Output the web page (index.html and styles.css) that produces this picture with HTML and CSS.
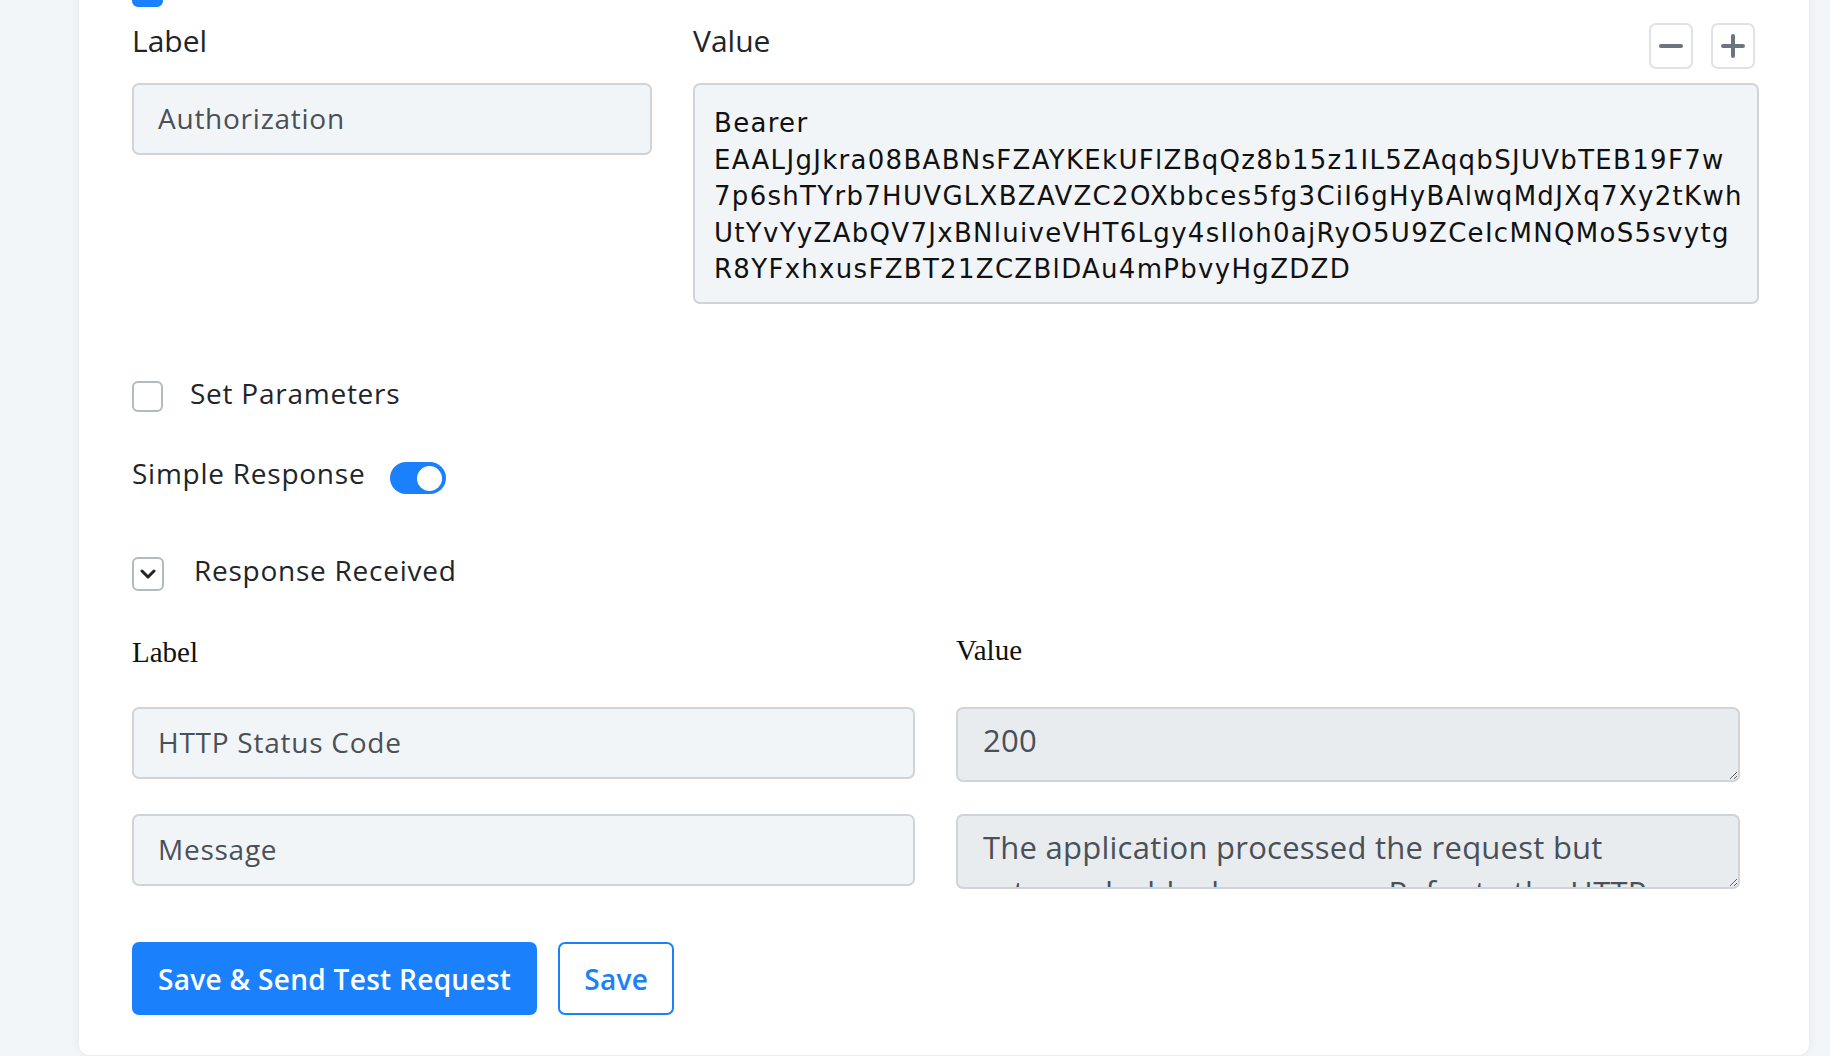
FILE: index.html
```html
<!DOCTYPE html>
<html lang="en">
<head>
<meta charset="utf-8">
<title>Webhook request</title>
<link rel="stylesheet" href="styles.css">
</head>
<body>
<div class="page">
  <section class="card">
    <span class="check check-on"></span>

    <div class="header-grid">
      <div class="head-cell">
        <span class="field-title">Label</span>
      </div>
      <div class="head-cell head-value">
        <span class="field-title">Value</span>
        <div class="steppers">
          <button class="step" type="button" aria-label="Remove header">
            <svg viewBox="0 0 24 24" width="24" height="24"><path d="M2 12h20"/></svg>
          </button>
          <button class="step" type="button" aria-label="Add header">
            <svg viewBox="0 0 24 24" width="24" height="24"><path d="M2 12h20M12 2v20"/></svg>
          </button>
        </div>
      </div>
      <div class="input input-top">Authorization</div>
      <div class="token">Bearer<br>EAALJgJkra08BABNsFZAYKEkUFlZBqQz8b15z1IL5ZAqqbSJUVbTEB19F7w<br>7p6shTYrb7HUVGLXBZAVZC2OXbbces5fg3CiI6gHyBAlwqMdJXq7Xy2tKwh<br>UtYvYyZAbQV7JxBNluiveVHT6Lgy4sIloh0ajRyO5U9ZCeIcMNQMoS5svytg<br>R8YFxhxusFZBT21ZCZBlDAu4mPbvyHgZDZD</div>
    </div>

    <div class="option option-params">
      <span class="check"></span>
      <span class="option-text">Set Parameters</span>
    </div>

    <div class="option option-simple">
      <span class="option-text">Simple Response</span>
      <span class="toggle"><span class="knob"></span></span>
    </div>

    <div class="option option-received">
      <span class="chev-box">
        <svg viewBox="0 0 16 10" width="16" height="10"><path d="M2 2l6 6 6-6"/></svg>
      </span>
      <span class="option-text">Response Received</span>
    </div>

    <div class="response-grid">
      <div class="plain-title">Label</div>
      <div class="plain-title plain-value">Value</div>
      <div class="input input-low">HTTP Status Code</div>
      <textarea class="readonly-area" readonly>200</textarea>
      <div class="input input-low">Message</div>
      <textarea class="readonly-area" readonly>The application processed the request but returned a blank response. Refer to the HTTP status code for details.</textarea>
    </div>

    <div class="actions">
      <button class="btn btn-primary" type="button">Save &amp; Send Test Request</button>
      <button class="btn btn-outline" type="button">Save</button>
    </div>
  </section>
</div>
</body>
</html>
```

FILE: styles.css
```css
html, body {
  margin: 0;
  padding: 0;
  height: 100%;
  overflow: hidden;
}

body {
  background: #f3f6f9;
  font-family: "Open Sans", "Lato", sans-serif;
  color: #212529;
}

.page {
  padding: 0 21px 0 79px;
}

.card {
  margin-top: -60px;
  padding: 36px 49px 40px 53px;
  background: #ffffff;
  border-radius: 10px;
  box-shadow: 0 0 8px rgba(30, 50, 80, 0.08);
}

/* checkboxes */
.check {
  display: block;
  box-sizing: border-box;
  width: 31px;
  height: 31px;
  border: 2px solid #b3bac2;
  border-radius: 6px;
  background: #fff;
  flex: none;
}

.check-on {
  background: #1a80fb;
  border-color: #1a80fb;
}

/* header row: label / value */
.header-grid {
  margin-top: 16px;
  display: grid;
  grid-template-columns: 520px 1066px;
  column-gap: 41px;
  row-gap: 14px;
}

.head-cell {
  height: 46px;
}

.head-value {
  display: flex;
  justify-content: space-between;
  align-items: flex-start;
}

.field-title {
  display: block;
  font-size: 30px;
  line-height: 36px;
  color: #212529;
}

.steppers {
  display: flex;
  gap: 18px;
  margin-right: 4px;
}

.step {
  box-sizing: border-box;
  width: 44px;
  height: 46px;
  padding: 0;
  border: 2px solid #dfe3e8;
  border-radius: 7px;
  background: #fff;
  display: flex;
  align-items: center;
  justify-content: center;
}

.step svg {
  fill: none;
  stroke: #6c757d;
  stroke-width: 4;
  stroke-linecap: round;
}

/* text-style inputs */
.input {
  box-sizing: border-box;
  border: 2px solid #ced4da;
  border-radius: 7px;
  background: #f2f5f8;
  color: #495057;
  font-size: 28px;
  line-height: 34px;
  letter-spacing: 0.75px;
  padding: 0 24px;
  display: flex;
  align-items: center;
}

.input-top {
  height: 72px;
  align-self: start;
  padding-bottom: 3px;
}

.token {
  box-sizing: border-box;
  height: 221px;
  border: 2px solid #ced4da;
  border-radius: 7px;
  background: #f2f5f8;
  padding: 20px 19px 0;
  font-family: "DejaVu Sans", "Verdana", sans-serif;
  font-size: 26px;
  line-height: 36.5px;
  letter-spacing: 1.3px;
  color: #111;
  white-space: nowrap;
  overflow: hidden;
}

/* option rows */
.option {
  display: flex;
  align-items: flex-start;
}

.option-text {
  font-size: 28px;
  line-height: 34px;
  letter-spacing: 0.75px;
  color: #212529;
}

.option-params {
  margin-top: 72px;
  gap: 27px;
}

.option-params .check {
  margin-top: 5px;
}

.option-simple {
  margin-top: 44px;
  gap: 25px;
}

.toggle {
  margin-top: 6px;
  box-sizing: border-box;
  width: 56px;
  height: 32px;
  border-radius: 16px;
  background: #1a80fb;
  display: flex;
  align-items: center;
  justify-content: flex-end;
  padding-right: 4px;
}

.knob {
  width: 25px;
  height: 25px;
  border-radius: 50%;
  background: #fff;
}

.option-received {
  margin-top: 59px;
  gap: 30px;
}

.chev-box {
  margin-top: 4px;
  box-sizing: border-box;
  width: 32px;
  height: 34px;
  border: 2px solid #b3bac2;
  border-radius: 6px;
  display: flex;
  align-items: center;
  justify-content: center;
  flex: none;
}

.chev-box svg {
  fill: none;
  stroke: #212529;
  stroke-width: 3;
  stroke-linecap: round;
  stroke-linejoin: round;
}

/* response mapping */
.response-grid {
  margin-top: 45px;
  margin-right: 20px;
  display: grid;
  grid-template-columns: 783px 784px;
  column-gap: 41px;
  row-gap: 32px;
  align-items: start;
}

.plain-title {
  font-family: "Liberation Serif", "Times New Roman", serif;
  font-size: 29px;
  line-height: 33px;
  color: #111;
  margin-bottom: 6px;
}

.plain-value {
  margin-top: -2px;
}

.input-low {
  height: 72px;
  padding-bottom: 2px;
}

.readonly-area {
  box-sizing: border-box;
  display: block;
  width: 100%;
  height: 75px;
  margin: 0;
  border: 2px solid #ced4da;
  border-radius: 7px;
  background: #e9ecef;
  color: #495057;
  font-family: "Open Sans", "Lato", sans-serif;
  font-size: 31px;
  line-height: 45px;
  letter-spacing: 0.25px;
  padding: 9px 25px 17px;
  resize: vertical;
  overflow: hidden;
  outline: none;
}

/* actions */
.actions {
  margin-top: 53px;
  display: flex;
  gap: 21px;
}

.btn {
  box-sizing: border-box;
  height: 73px;
  padding: 0 24px;
  border-radius: 7px;
  font-family: "Open Sans", "Lato", sans-serif;
  font-size: 28px;
  font-weight: 600;
  letter-spacing: 0.3px;
  cursor: pointer;
}

.btn-primary {
  background: #1a80fb;
  border: 2px solid #1a80fb;
  color: #fff;
}

.btn-outline {
  background: #fff;
  border: 2px solid #1a80fb;
  color: #1a80fb;
}
```
